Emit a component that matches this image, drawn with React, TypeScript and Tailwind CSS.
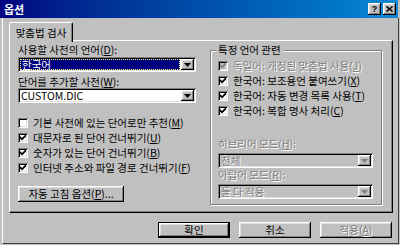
import React from "react";

const raised =
  "bg-[#c0c0c0] shadow-[inset_-1px_-1px_0_#000,inset_1px_1px_0_#fff,inset_-2px_-2px_0_#808080,inset_2px_2px_0_#dfdfdf]";
const sunken =
  "shadow-[inset_1px_1px_0_#808080,inset_-1px_-1px_0_#fff,inset_2px_2px_0_#000,inset_-2px_-2px_0_#dfdfdf]";
const dis = "text-[#808080] [text-shadow:1px_1px_0_#fff]";

function M({ c }: { c: string }) {
  return <span className="underline underline-offset-[1px]">{c}</span>;
}

function Label({ children, disabled }: { children: React.ReactNode; disabled?: boolean }) {
  return (
    <div
      className={`h-[12px] text-[10.5px] leading-[12px] whitespace-nowrap ${disabled ? dis : "text-black"}`}
    >
      {children}
    </div>
  );
}

function Check({ color }: { color: string }) {
  return (
    <svg width="7" height="7" viewBox="0 0 7 7">
      <path d="M0 2 L2 4 L6 0 L6 2.6 L2 6.6 L0 4.6 Z" fill={color} />
    </svg>
  );
}

function CheckRow({
  checked,
  disabled,
  children,
}: {
  checked?: boolean;
  disabled?: boolean;
  children: React.ReactNode;
}) {
  return (
    <div className="flex items-center h-[15px] gap-[5px]">
      <div
        className={`w-[10px] h-[10px] flex items-center justify-center shrink-0 ${sunken} ${disabled ? "bg-[#c0c0c0]" : "bg-white"}`}
      >
        {checked && <Check color={disabled ? "#808080" : "#000"} />}
      </div>
      <span
        className={`text-[10.5px] leading-[12px] whitespace-nowrap ${disabled ? dis : "text-black"}`}
      >
        {children}
      </span>
    </div>
  );
}

function Arrow({ color }: { color: string }) {
  return (
    <svg width="7" height="4" viewBox="0 0 7 4">
      <path d="M0 0 L7 0 L3.5 4 Z" fill={color} />
    </svg>
  );
}

function Combo({
  text,
  selected,
  disabled,
  width,
}: {
  text: string;
  selected?: boolean;
  disabled?: boolean;
  width: string;
}) {
  return (
    <div
      className={`${width} h-[15px] flex items-stretch p-[2px] ${sunken} ${disabled ? "bg-[#c0c0c0]" : "bg-white"}`}
    >
      <div className="flex-1 flex items-center pr-[1px]">
        <div
          className={`h-full flex-1 flex items-center pl-[1px] text-[10.5px] leading-[11px] whitespace-nowrap ${
            selected
              ? "bg-[#000080] text-white border border-dotted border-[#ffff80]"
              : disabled
                ? dis
                : "text-black"
          }`}
        >
          {text}
        </div>
      </div>
      <div className={`w-[13px] flex items-center justify-center ${raised}`}>
        <Arrow color={disabled ? "#808080" : "#000"} />
      </div>
    </div>
  );
}

function Btn({
  children,
  w,
  def,
  disabled,
}: {
  children: React.ReactNode;
  w: string;
  def?: boolean;
  disabled?: boolean;
}) {
  return (
    <div className={`${w} h-[16px] ${def ? "border border-black" : ""}`}>
      <div
        className={`w-full h-full flex items-center justify-center text-[10.5px] leading-[12px] whitespace-nowrap ${raised} ${disabled ? dis : "text-black"}`}
      >
        {children}
      </div>
    </div>
  );
}

export default function App() {
  return (
    <div className="w-[400px] h-[245px] bg-[#c0c0c0] flex flex-col overflow-hidden font-['Noto_Sans_CJK_KR',sans-serif]">
      {/* title bar */}
      <div className="h-[18px] mr-[2px] flex items-center bg-gradient-to-r from-[#000080] to-[#1488d4] pl-[4px] pr-[2px]">
        <span className="text-white font-bold text-[11px] leading-[12px]">옵션</span>
        <div className="ml-auto flex gap-[2px]">
          <div className={`w-[13px] h-[12px] flex items-center justify-center ${raised}`}>
            <span className="text-black font-bold text-[9px] leading-[9px] font-['Liberation_Sans',sans-serif]">?</span>
          </div>
          <div className={`w-[13px] h-[12px] flex items-center justify-center ${raised}`}>
            <svg width="7" height="6" viewBox="0 0 7 6">
              <path d="M0.5 0.5 L6.5 5.5 M6.5 0.5 L0.5 5.5" stroke="#000" strokeWidth="1.6" />
            </svg>
          </div>
        </div>
      </div>

      {/* body */}
      <div className="flex-1 ml-[2px] mr-[1px] mb-[1px] border-l border-white border-r border-r-[#404040] border-b border-b-[#404040] pl-[6px] pr-[5px] pt-[4px] flex flex-col">
        {/* tab */}
        <div className="flex">
          <div className="relative z-10 w-[64px] h-[20px] -mb-[2px] bg-[#c0c0c0] border-t border-l border-white border-r border-r-black rounded-t-[2px] shadow-[inset_-1px_0_0_#808080] flex items-start justify-center pt-[4px]">
            <span className="text-[10.5px] leading-[12px] text-black whitespace-nowrap">맞춤법 검사</span>
          </div>
        </div>

        {/* panel */}
        <div className="h-[173px] border-t border-l border-white border-r border-r-black border-b border-b-black shadow-[inset_-1px_-1px_0_#808080] flex items-start pl-[8px]">
          {/* left column */}
          <div className="w-[178px] flex flex-col">
            <div className="mt-[3px]">
              <Label>
                사용할 사전의 언어(<M c="D" />):
              </Label>
            </div>
            <div className="mt-[1px]">
              <Combo text="한국어" selected width="w-[178px]" />
            </div>
            <div className="mt-[4px]">
              <Label>
                단어를 추가할 사전(<M c="W" />):
              </Label>
            </div>
            <Combo text="CUSTOM.DIC" width="w-[178px]" />
            <div className="mt-[12px] flex flex-col">
              <CheckRow>
                기본 사전에 있는 단어로만 추천(<M c="M" />)
              </CheckRow>
              <CheckRow checked>
                대문자로 된 단어 건너뛰기(<M c="U" />)
              </CheckRow>
              <CheckRow checked>
                숫자가 있는 단어 건너뛰기(<M c="B" />)
              </CheckRow>
              <CheckRow checked>
                인터넷 주소와 파일 경로 건너뛰기(<M c="F" />)
              </CheckRow>
            </div>
            <div className="mt-[11px]">
              <Btn w="w-[106px]">
                자동 고침 옵션(<M c="P" />)...
              </Btn>
            </div>
          </div>

          {/* right group */}
          <div className="relative ml-[14px] mt-[9px] w-[172px] h-[155px] border border-[#808080] shadow-[1px_1px_0_#fff,inset_1px_1px_0_#fff] pl-[7px] pt-[7px] flex flex-col">
            <div className="absolute -top-[7px] left-[5px] px-[2px] bg-[#c0c0c0] text-[10.5px] leading-[12px] text-black whitespace-nowrap">
              특정 언어 관련
            </div>
            <CheckRow checked disabled>
              독일어: 개정된 맞춤법 사용(<M c="J" />)
            </CheckRow>
            <CheckRow checked>
              한국어: 보조용언 붙여쓰기(<M c="X" />)
            </CheckRow>
            <CheckRow checked>
              한국어: 자동 변경 목록 사용(<M c="T" />)
            </CheckRow>
            <CheckRow checked>
              한국어: 복합 명사 처리(<M c="C" />)
            </CheckRow>
            <div className="mt-[20px]">
              <Label disabled>
                히브리어 모드(<M c="H" />):
              </Label>
            </div>
            <div className="mt-[3px]">
              <Combo text="전체" disabled width="w-[155px]" />
            </div>
            <div className="mt-[1px]">
              <Label disabled>
                아랍어 모드(<M c="R" />):
              </Label>
            </div>
            <div className="mt-[3px]">
              <Combo text="둘 다 적용" disabled width="w-[155px]" />
            </div>
          </div>
        </div>

        {/* bottom buttons */}
        <div className="mt-[9px] flex justify-end gap-[9px] pr-[1px]">
          <Btn w="w-[72px]" def>
            확인
          </Btn>
          <Btn w="w-[72px]">취소</Btn>
          <Btn w="w-[72px]" disabled>
            적용(<M c="A" />)
          </Btn>
        </div>
      </div>
    </div>
  );
}
